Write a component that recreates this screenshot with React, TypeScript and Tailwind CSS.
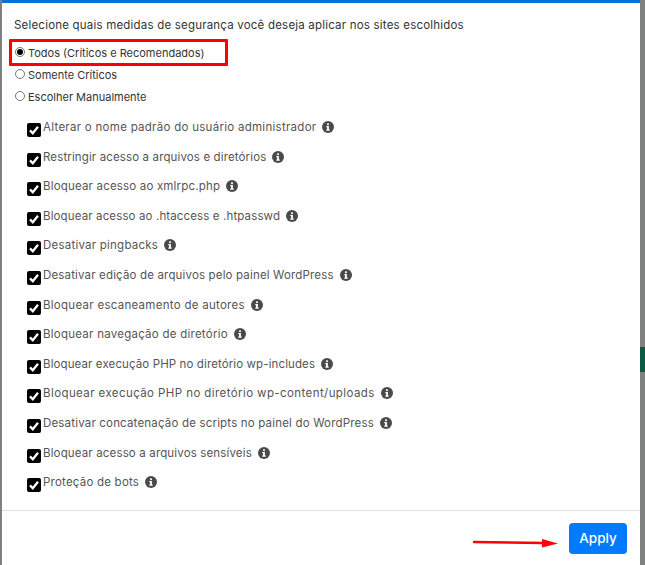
const items = [
  { t: "Alterar o nome padrão do usuário administrador", c: "tracking-[0.28px]" },
  { t: "Restringir acesso a arquivos e diretórios", c: "tracking-[0.13px]" },
  { t: "Bloquear acesso ao xmlrpc.php", c: "tracking-[0.18px]" },
  { t: "Bloquear acesso ao .htaccess e .htpasswd", c: "tracking-[0.13px]" },
  { t: "Desativar pingbacks", c: "tracking-[0.23px]" },
  { t: "Desativar edição de arquivos pelo painel WordPress", c: "tracking-[0.16px]" },
  { t: "Bloquear escaneamento de autores", c: "tracking-[0.28px]" },
  { t: "Bloquear navegação de diretório", c: "tracking-[0.25px]" },
  { t: "Bloquear execução PHP no diretório wp-includes", c: "tracking-[0.11px]" },
  { t: "Bloquear execução PHP no diretório wp-content/uploads", c: "tracking-[0.41px]" },
  { t: "Desativar concatenação de scripts no painel do WordPress", c: "tracking-[0.18px]" },
  { t: "Bloquear acesso a arquivos sensíveis", c: "tracking-[0.15px]" },
  { t: "Proteção de bots", c: "tracking-[0.22px]" },
];

function Radio({ checked, label }: { checked?: boolean; label: string }) {
  return (
    <div className="flex h-[22px] items-start">
      <span className="ml-[1px] mt-[3px] flex h-[10px] w-[10px] items-center justify-center rounded-full border border-[#767676] bg-white">
        {checked && <span className="h-[6px] w-[6px] rounded-full bg-black" />}
      </span>
      <span className="ml-[3px] mt-[1px] text-[11px] leading-[16px] tracking-[0px] text-[#333]">{label}</span>
    </div>
  );
}

function Check() {
  return (
    <span className="mt-[4px] flex h-[14px] w-[14px] shrink-0 items-center justify-center rounded-[2px] bg-black">
      <svg width="12" height="12" viewBox="0 0 12 12" fill="none">
        <path d="M2 6.4 L4.8 9.2 L10 2.8" stroke="white" strokeWidth="2.3" />
      </svg>
    </span>
  );
}

function Info() {
  return (
    <svg width="12" height="12" viewBox="0 0 12 12" className="ml-[6px] mt-[2px] shrink-0">
      <circle cx="6" cy="6" r="6" fill="#4a4a4a" />
      <rect x="5.1" y="2.3" width="1.8" height="1.8" fill="white" />
      <path d="M4.3 5.1 H6.9 V8.6 H7.7 V9.7 H4.3 V8.6 H5.1 V6.2 H4.3 Z" fill="white" />
    </svg>
  );
}

export default function App() {
  return (
    <div className="relative flex h-[565px] w-[645px] overflow-hidden bg-[#7f8080] font-['Inter','Liberation_Sans',sans-serif]">
      <div className="ml-[2px] flex h-full w-[638px] flex-col bg-white">
        <div className="h-[3px] bg-[#0071e3]" />
        <div className="flex-1 pl-[12px] pt-[14px]">
          <p className="text-[11.5px] leading-[16px] tracking-[0.2px] text-[#333]">
            Selecione quais medidas de segurança você deseja aplicar nos sites escolhidos
          </p>
          <div className="mt-[10px] flex flex-col pt-[1px]">
            <Radio checked label="Todos (Críticos e Recomendados)" />
            <Radio label="Somente Críticos" />
            <Radio label="Escolher Manualmente" />
          </div>
          <ul className="mt-[9px] flex flex-col pl-[13px]">
            {items.map((i) => (
              <li key={i.t} className="flex h-[29.6px] items-start">
                <Check />
                <span className={"ml-[2px] text-[11.5px] leading-[16px] text-[#555] " + i.c}>{i.t}</span>
                <Info />
              </li>
            ))}
          </ul>
        </div>
        <div className="flex h-[55px] items-start justify-end border-t border-[#dee2e6] pr-[13px] pt-[12px]">
          <button className="h-[31px] w-[58px] rounded-[4px] bg-[#007bff] text-[13.5px] font-medium text-white">Apply</button>
        </div>
      </div>
      <div className="flex flex-col pt-[347px]">
        <div className="h-[25px] w-[5px] bg-[#0b5a44]" />
      </div>
      <div className="absolute left-[9px] top-[39px] h-[27px] w-[219px] rounded-[1px] border-[3px] border-[#ff0000]" />
      <svg className="absolute left-[472px] top-[536px]" width="88" height="14" viewBox="0 0 88 14">
        <path d="M2 6 L72 7" stroke="#ff0000" strokeWidth="2.4" strokeLinecap="round" />
        <path d="M70 3 L86 7.5 L70 11.5 Z" fill="#ff0000" />
      </svg>
    </div>
  );
}
